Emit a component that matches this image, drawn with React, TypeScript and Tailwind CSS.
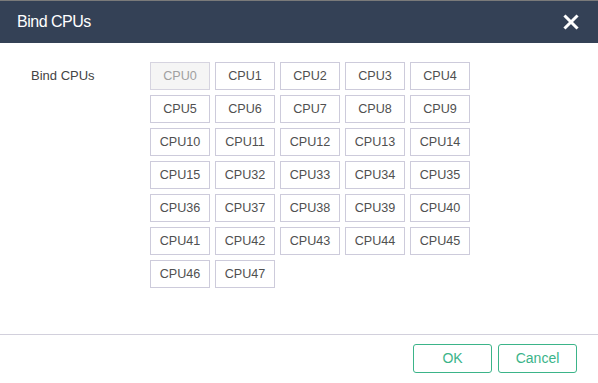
import React from "react";

const cpus = [
  "CPU0","CPU1","CPU2","CPU3","CPU4",
  "CPU5","CPU6","CPU7","CPU8","CPU9",
  "CPU10","CPU11","CPU12","CPU13","CPU14",
  "CPU15","CPU32","CPU33","CPU34","CPU35",
  "CPU36","CPU37","CPU38","CPU39","CPU40",
  "CPU41","CPU42","CPU43","CPU44","CPU45",
  "CPU46","CPU47",
];

export default function App() {
  return (
    <div className="w-[598px] h-[383px] bg-white flex flex-col overflow-hidden" style={{ fontFamily: '"Liberation Sans", Arial, sans-serif' }}>
      <div className="h-[43px] shrink-0 bg-[#344156] border-t border-[#7a7a7a] flex items-center justify-between pl-[17px] pr-[19px]">
        <span className="text-white text-[16px] tracking-[-0.5px]">Bind CPUs</span>
        <svg width="16" height="16" viewBox="0 0 16 16">
          <path d="M2.5 2.5 L13.5 13.5 M13.5 2.5 L2.5 13.5" stroke="white" strokeWidth="3" strokeLinecap="square" />
        </svg>
      </div>
      <div className="flex-1 flex pl-[31px] pt-[19px]">
        <div className="w-[119px] text-[13px] text-[#444] leading-[28px]">Bind CPUs</div>
        <div className="grid grid-cols-[repeat(5,60px)] gap-x-[5px] gap-y-[5px] content-start">
          {cpus.map((c, i) => (
            <div
              key={c}
              className={
                i === 0
                  ? "h-[28px] border border-[#d6d4e0] bg-[#f5f5f5] text-[#a0a0a0] text-[12.6px] flex items-center justify-center"
                  : "h-[28px] border border-[#cdcbdb] bg-white text-[#505050] text-[12.6px] flex items-center justify-center"
              }
            >
              {c}
            </div>
          ))}
        </div>
      </div>
      <div className="h-[49px] shrink-0 border-t border-[#d2d0dc] flex items-start justify-end gap-[6px] pr-[21px] pt-[9px]">
        <button className="w-[79px] h-[29px] border border-[#3bb489] rounded-[3px] text-[#3bb489] text-[14px] bg-white">OK</button>
        <button className="w-[79px] h-[29px] border border-[#3bb489] rounded-[3px] text-[#3bb489] text-[14px] bg-white">Cancel</button>
      </div>
    </div>
  );
}
